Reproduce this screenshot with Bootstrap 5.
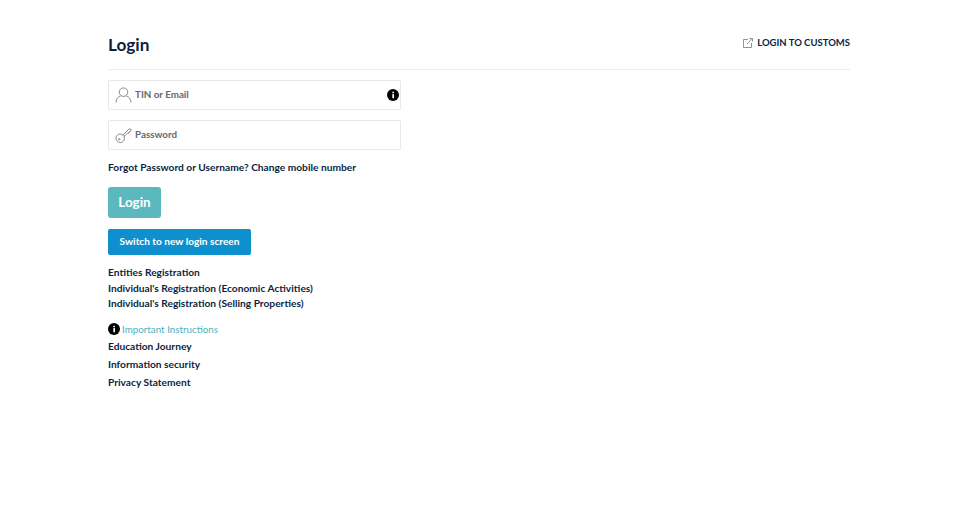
<!DOCTYPE html>
<html lang="en">
<head>
    <meta charset="UTF-8">
    <meta name="viewport" content="width=device-width, initial-scale=1.0">
    <title>Login</title>
    <link href="https://cdn.jsdelivr.net/npm/bootstrap@5.3.0/dist/css/bootstrap.min.css" rel="stylesheet">
    <style>
        body {
            background: #fff;
            color: #0b1f3f;
            font-family: Lato, "Liberation Sans", sans-serif;
            font-size: 10.2px;
            font-weight: 700;
        }
        a { color: #0b1f3f; text-decoration: none; }
        .login-page { width: 742px; margin-left: 108px; padding-top: 34px; }
        .login-head {
            height: 36px;
            border-bottom: 1px solid #ececec;
        }
        .login-title { font-size: 17.2px; font-weight: 700; line-height: 22px; margin: 0; }
        .customs-link { font-size: 9.5px; line-height: 18px; }
        .login-form { width: 293px; margin-top: 10px; }
        .field-box {
            height: 30px;
            border: 1px solid #e8e8e8;
            border-radius: 2px;
            padding: 0 1px 0 6px;
            margin-bottom: 10px;
            color: #66696e;
            font-size: 9.8px;
            gap: 3px;
        }
        .field-box input {
            border: 0;
            outline: 0;
            flex: 1;
            min-width: 0;
            padding: 0 0 1px;
            font: inherit;
            color: inherit;
        }
        .field-box input::placeholder { color: #66696e; opacity: 1; }
        .forgot-row { line-height: 14px; margin-top: 10px; }
        .btn-login {
            display: block;
            width: 53px;
            height: 31px;
            margin-top: 13px;
            padding: 0;
            background: #5bb8be;
            border: 0;
            border-radius: 3px;
            color: #fff;
            font-size: 13.4px;
            font-weight: 700;
        }
        .btn-switch {
            display: block;
            width: 143px;
            height: 26px;
            margin-top: 11px;
            padding: 0;
            background: #0e90cf;
            border: 0;
            border-radius: 2px;
            color: #fff;
            font-size: 10.1px;
            font-weight: 700;
        }
        .reg-links { margin-top: 10px; line-height: 15.5px; }
        .help-links { margin-top: 9px; }
        .help-links > div { height: 17.7px; line-height: 17.7px; }
        .important-link { color: #4fb0bb; font-weight: 400; font-size: 9.8px; margin-left: 2px; }
    </style>
</head>
<body>
    <div class="login-page">
        <div class="login-head d-flex justify-content-between align-items-start">
            <h1 class="login-title">Login</h1>
            <a href="#" class="customs-link d-flex align-items-center gap-1">
                <svg width="10" height="10" viewBox="0 0 10 10" fill="none" stroke="#777" stroke-width=".8"><path d="M5 1.500H.5v8h8V5M4 6l5-5.500M6.300.5H9.500v3"/></svg>
                LOGIN TO CUSTOMS
            </a>
        </div>

        <form class="login-form">
            <div class="field-box d-flex align-items-center">
                <svg width="17" height="18" viewBox="0 0 18 18" fill="none" stroke="#777" stroke-width=".9"><circle cx="9" cy="6" r="4.500"/><path d="M1 17c0-4 3-6.500 5-7M17 17c0-4-3-6.500-5-7"/></svg>
                <input type="text" placeholder="TIN or Email">
                <svg width="12" height="12" viewBox="0 0 13 13"><circle cx="6.500" cy="6.500" r="6.500" fill="#000"/><rect x="5.800" y="5.500" width="1.800" height="4.500" fill="#fff"/><rect x="5.800" y="3" width="1.800" height="1.600" fill="#fff"/></svg>
            </div>
            <div class="field-box d-flex align-items-center">
                <svg width="17" height="18" viewBox="0 0 18 18" fill="none" stroke="#777" stroke-width=".9"><circle cx="5.500" cy="12.500" r="4.500"/><circle cx="4.500" cy="13.500" r=".8"/><path d="M8.500 9L15 2.500l2 .5-.5 2-1.500.5v1.500h-1.500L12 8.500l-2.500 2"/></svg>
                <input type="password" placeholder="Password">
            </div>
            <div class="forgot-row"><a href="#">Forgot Password or Username?</a> <a href="#">Change mobile number</a></div>
            <button type="button" class="btn btn-login">Login</button>
            <button type="button" class="btn btn-switch">Switch to new login screen</button>
        </form>

        <div class="reg-links">
            <div><a href="#">Entities Registration</a></div>
            <div><a href="#">Individual's Registration (Economic Activities)</a></div>
            <div><a href="#">Individual's Registration (Selling Properties)</a></div>
        </div>

        <div class="help-links">
            <div class="d-flex align-items-center">
                <svg width="12" height="12" viewBox="0 0 13 13"><circle cx="6.500" cy="6.500" r="6.500" fill="#000"/><rect x="5.800" y="5.500" width="1.800" height="4.500" fill="#fff"/><rect x="5.800" y="3" width="1.800" height="1.600" fill="#fff"/></svg>
                <a href="#" class="important-link">Important Instructions</a>
            </div>
            <div><a href="#">Education Journey</a></div>
            <div><a href="#">Information security</a></div>
            <div><a href="#">Privacy Statement</a></div>
        </div>
    </div>
    <script src="https://cdn.jsdelivr.net/npm/bootstrap@5.3.0/dist/js/bootstrap.bundle.min.js"></script>
</body>
</html>
